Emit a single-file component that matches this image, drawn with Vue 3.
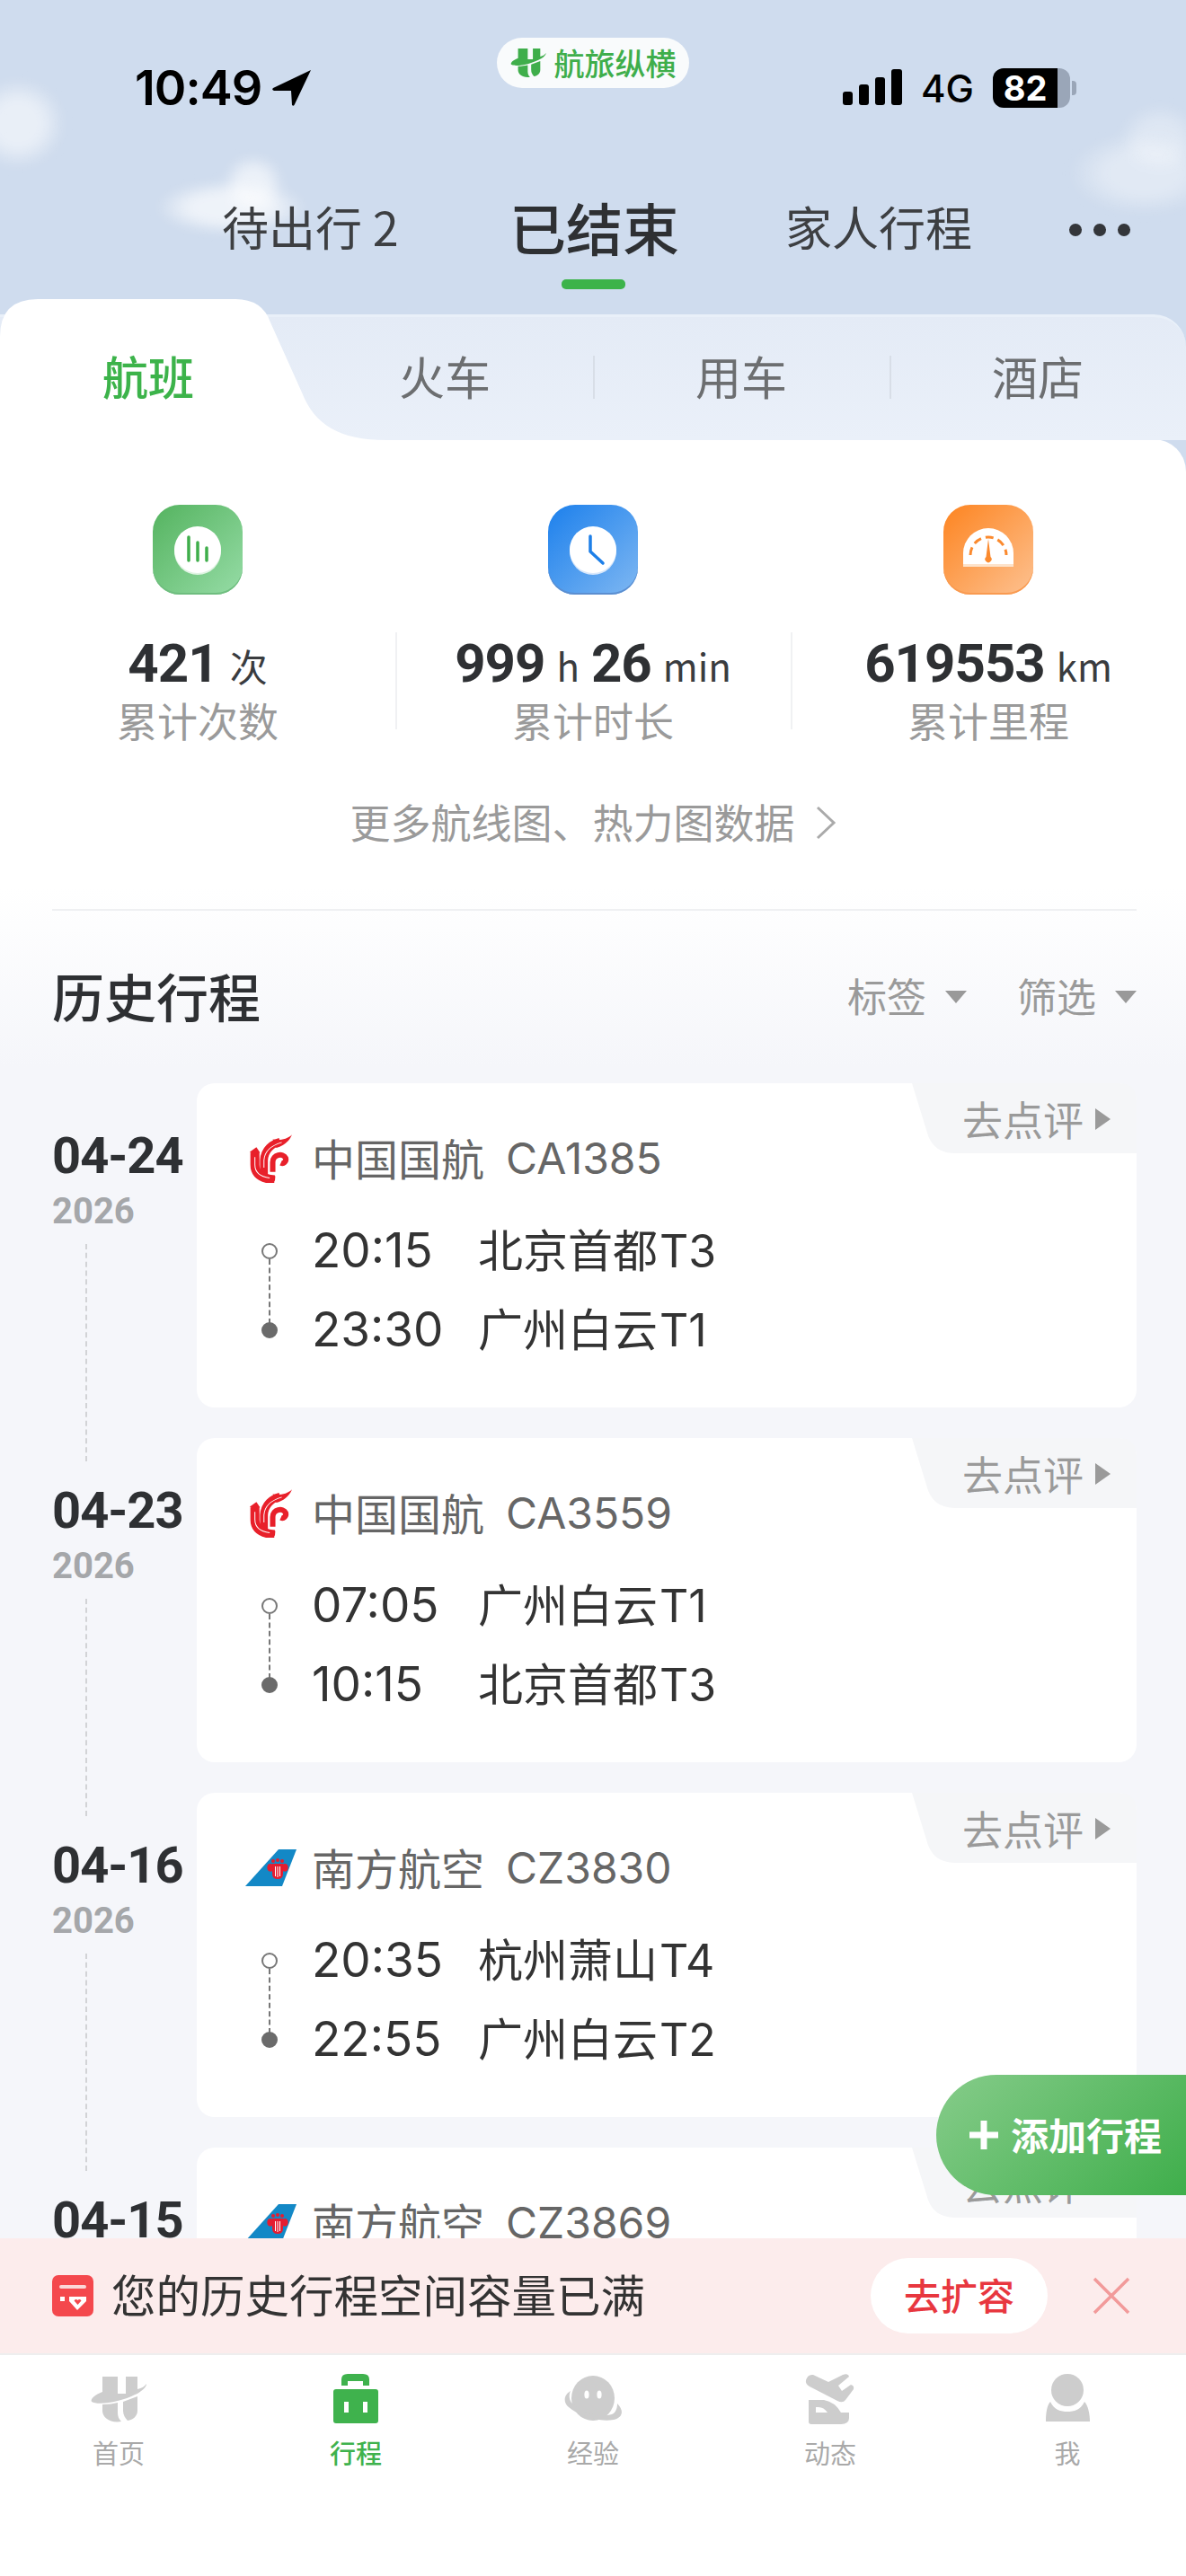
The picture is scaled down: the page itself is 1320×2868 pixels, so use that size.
<template>
  <div class="page">
    <!-- Sky header -->
    <header class="sky">
      <span class="cloud cloud-a"></span>
      <span class="cloud cloud-b"></span>
      <span class="cloud cloud-c"></span>

      <div class="status">
        <div class="status-time">
          <span>10:49</span>
          <svg width="44" height="42" viewBox="0 0 44 42"><path d="M43 1 L1 21 Q-1 23 2 24 L21 24 L22 40 Q24 42 25 39 Z" fill="#000" /></svg>
        </div>
        <div class="status-right">
          <svg width="66" height="42" viewBox="0 0 66 42" fill="#000">
            <rect x="0" y="25" width="11" height="15" rx="3" />
            <rect x="18" y="17" width="11" height="23" rx="3" />
            <rect x="36" y="9" width="11" height="31" rx="3" />
            <rect x="54" y="0" width="12" height="40" rx="3" />
          </svg>
          <span class="net">4G</span>
          <div class="battery">
            <div class="battery-fill">82</div>
            <div class="battery-rest"></div>
            <div class="battery-nub"></div>
          </div>
        </div>
      </div>

      <div class="island">
        <svg width="40" height="33" viewBox="0 0 62 52" fill="#3fae4b">
          <path d="M13 0 H30 V19 H39 V0 H52 V14 C57 13 60 11 62 8 C62 14 50 22 30 27 C18 30 6 31 1 28 C-1 25 5 20 13 17 Z" />
          <path d="M13 31 C20 31 25 30 30 29 V40 C30 44 31 47 34 50 C22 52 13 46 13 38 Z" />
          <path d="M36 28 L52 22 V38 C52 44 47 48 41 49 C38 46 36 42 36 38 Z" />
        </svg>
        <span>航旅纵横</span>
      </div>

      <nav class="top-tabs">
        <span class="top-tab first">待出行 2</span>
        <span class="top-tab active">已结束</span>
        <span class="top-tab last">家人行程</span>
        <span class="dots"><i></i><i></i><i></i></span>
      </nav>
    </header>

    <!-- Sub tabs -->
    <div class="subtabs">
      <div class="subtabs-strip"></div>
      <svg class="subtab-active" width="440" height="157" viewBox="0 0 440 157">
        <path d="M0 157 V42 Q0 0 42 0 H262 Q292 0 301 26 L336 104 C350 140 378 157 430 157 Z" fill="#fff" />
      </svg>
      <div class="subtabs-row">
        <span v-for="(t, i) in subTabs" :key="t" class="subtab" :class="{ on: i === 0, sep: i > 1 }">{{ t }}</span>
      </div>
    </div>

    <!-- Content -->
    <main class="content">
      <section class="stats">
        <div v-for="s in stats" :key="s.label" class="stat">
          <div class="stat-icon" :class="s.kind">
            <svg v-if="s.kind === 'green'" width="100" height="100" viewBox="0 0 100 100">
              <circle cx="50" cy="52" r="26" fill="#dff3e2" />
              <circle cx="50" cy="50" r="26" fill="#fff" />
              <path d="M40 36 V62 M50 42 V62 M60 48 V62" stroke="#3fae4b" stroke-width="3.5" stroke-linecap="round" />
            </svg>
            <svg v-else-if="s.kind === 'blue'" width="100" height="100" viewBox="0 0 100 100">
              <circle cx="50" cy="52" r="26" fill="#d7e7fb" />
              <circle cx="50" cy="50" r="26" fill="#fff" />
              <path d="M47 35 V52 L61 65" fill="none" stroke="#1d7fe8" stroke-width="3.5" stroke-linecap="round" stroke-linejoin="round" />
            </svg>
            <svg v-else width="100" height="100" viewBox="0 0 100 100">
              <path d="M22 66 V54 A28 28 0 0 1 78 54 V66 Z" fill="#fff" />
              <path d="M22 66 H78 V69 H22 Z" fill="#fde3cb" />
              <path d="M30 56 A20 20 0 0 1 70 56" fill="none" stroke="#fb8a2e" stroke-width="3" stroke-dasharray="9 5" />
              <path d="M50 38 L52.5 58 A3.6 3.6 0 1 1 47.5 58 Z" fill="#fb8a2e" />
            </svg>
          </div>
          <div class="stat-value">
            <template v-for="(p, i) in s.parts" :key="i">
              <b v-if="i % 2 === 0">{{ p }}</b>
              <small v-else>{{ p }}</small>
            </template>
          </div>
          <div class="stat-label">{{ s.label }}</div>
        </div>
      </section>

      <div class="more">
        <span>更多航线图、热力图数据</span>
        <svg width="24" height="40" viewBox="0 0 24 40"><path d="M3 3 L21 20 L3 37" fill="none" stroke="#aaa" stroke-width="3" /></svg>
      </div>

      <div class="divider"></div>

      <div class="section-head">
        <h2>历史行程</h2>
        <div class="filters">
          <span class="filter"><em>标签</em><i class="caret"></i></span>
          <span class="filter"><em>筛选</em><i class="caret"></i></span>
        </div>
      </div>

      <div class="trips">
        <article v-for="t in trips" :key="t.date + t.no" class="trip">
          <div class="trip-date">
            <div class="date">{{ t.date }}</div>
            <div class="year">2026</div>
            <div class="date-line"></div>
          </div>
          <div class="card">
            <div class="review">
              <svg class="review-bg" width="250" height="78" viewBox="0 0 250 78">
                <path d="M0 0 H230 Q250 0 250 20 V78 H48 Q22 78 16 52 Z" fill="#f5f6f8" />
              </svg>
              <span class="review-text">去点评</span>
              <i class="review-arrow"></i>
            </div>
            <div class="airline">
              <svg v-if="t.air === 'ca'" class="logo" width="47" height="54" viewBox="0 0 140 160">
                <path d="M17 60 L17 100 C17 130 38 146 82 150" fill="none" stroke="#e8202a" stroke-width="30" />
                <path d="M47 132 L47 85 C49 50 75 30 100 24" fill="none" stroke="#e8202a" stroke-width="26" />
                <path d="M45 122 C48 138 60 144 84 146" fill="none" stroke="#e8202a" stroke-width="16" />
                <path d="M140 0 C130 25 110 38 88 44 L76 16 C100 20 125 15 140 0 Z" fill="#e8202a" />
                <path d="M0 58 L22 42 L34 60 L15 68 Z" fill="#e8202a" />
                <path d="M76 124 L76 92 C76 66 110 60 119 78 C122 90 112 98 103 94" fill="none" stroke="#e8202a" stroke-width="18" />
                <path d="M17 75 L17 100 C17 126 36 140 66 144 M47 110 L47 85 C49 55 72 36 106 26" fill="none" stroke="#fff" stroke-width="3" />
              </svg>
              <svg v-else class="logo logo-cz" width="58" height="42" viewBox="0 0 58 42">
                <path d="M0 41 L37 0 H57 L41 41 Z" fill="#1388c6" />
                <g fill="#e51c30">
                  <circle cx="31" cy="13" r="2" />
                  <circle cx="36" cy="12" r="2" />
                  <circle cx="41" cy="13" r="2" />
                  <path d="M30 16 H42 V27 Q42 33 36 33 Q30 33 30 27 Z" />
                  <path d="M31 17 C26 14 23 18 25 23 C26 25 29 25 30 24 Z" />
                  <path d="M41 17 C46 14 49 18 47 23 C46 25 43 25 42 24 Z" />
                </g>
                <path d="M33.5 19 V30 M36 19 V31 M38.5 19 V30" stroke="#fff" stroke-width="1" />
              </svg>
              <span class="airline-name">{{ t.name }}</span>
              <span class="airline-no">{{ t.no }}</span>
            </div>
            <div class="leg from">
              <i class="dot-open"></i>
              <span class="leg-time">{{ t.dep }}</span>
              <span class="leg-place">{{ t.from }}</span>
            </div>
            <div class="leg">
              <i class="dot-full"></i>
              <span class="leg-time">{{ t.arr }}</span>
              <span class="leg-place">{{ t.to }}</span>
            </div>
          </div>
        </article>
      </div>
    </main>

    <!-- Floating add button -->
    <div class="fab">
      <svg width="34" height="36" viewBox="0 0 34 36"><path d="M17 2 V34 M1 18 H33" stroke="#fff" stroke-width="7" /></svg>
      <span>添加行程</span>
    </div>

    <!-- Capacity banner -->
    <div class="banner">
      <svg class="banner-icon" width="46" height="46" viewBox="0 0 46 46">
        <rect width="46" height="46" rx="7" fill="#f4484d" />
        <rect x="8" y="11" width="30" height="4" rx="2" fill="#fbd7d8" />
        <rect x="9" y="24" width="5" height="5" fill="#fff" />
        <path d="M19 24 H38 V29 L28 39 L19 29 Z" fill="#fff" />
        <path d="M28.5 33 L24.5 28.5 Q26.5 26 28.5 28 Q30.5 26 32.5 28.5 Z" fill="#f4484d" />
      </svg>
      <span class="banner-text">您的历史行程空间容量已满</span>
      <span class="banner-btn">去扩容</span>
      <svg class="banner-close" width="42" height="42" viewBox="0 0 42 42"><path d="M2 2 L40 40 M40 2 L2 40" stroke="#f29a9a" stroke-width="3.5" /></svg>
    </div>

    <!-- Tab bar -->
    <nav class="tabbar">
      <div v-for="b in barTabs" :key="b.key" class="bar-item" :class="{ on: b.key === 'trip' }">
        <svg width="66" height="58" viewBox="0 0 66 58">
          <g v-if="b.key === 'home'" fill="#cdcdcd" transform="translate(2 4)">
            <path d="M13 0 H30 V19 H39 V0 H52 V14 C57 13 60 11 62 8 C62 14 50 22 30 27 C18 30 6 31 1 28 C-1 25 5 20 13 17 Z" />
            <path d="M13 31 C20 31 25 30 30 29 V40 C30 44 31 47 34 50 C22 52 13 46 13 38 Z" />
            <path d="M36 28 L52 22 V38 C52 44 47 48 41 49 C38 46 36 42 36 38 Z" />
          </g>
          <g v-else-if="b.key === 'trip'" fill="#3fb24d">
            <path d="M10 14 V7 Q10 1 17 1 H34 Q41 1 41 7 V14 H34 V9 H17 V14 Z" transform="translate(7 0)" />
            <path d="M11 18 H55 Q58 18 58 21 V53 Q58 56 55 56 H11 Q8 56 8 53 V21 Q8 18 11 18 Z" />
            <rect x="20" y="32" width="5" height="12" fill="#fff" />
            <rect x="41" y="32" width="5" height="12" fill="#fff" />
          </g>
          <g v-else-if="b.key === 'exp'" fill="#cdcdcd">
            <ellipse cx="33" cy="28" rx="24" ry="25" />
            <path d="M8 20 C1 24 -1 32 6 38 C16 47 38 55 56 52 C66 50 68 42 60 34 C60 40 58 44 54 46 C40 50 20 44 10 34 C6 30 6 24 8 20 Z" />
            <ellipse cx="26" cy="24" rx="2.6" ry="4.5" fill="#fff" />
            <ellipse cx="40" cy="24" rx="2.6" ry="4.5" fill="#fff" />
          </g>
          <g v-else-if="b.key === 'feed'" fill="#cdcdcd">
            <path d="M14 2 L31 10 L47 2 Q53 0 54 4 L42 14 L46 20 L56 13 Q60 14 59 18 L50 30 Q47 34 41 31 L10 15 Q5 12 6 8 Q8 1 14 2 Z" />
            <path d="M9 30 H26 Q38 32 45 44 H54 V50 Q54 57 45 57 H12 Q9 57 9 54 Z M17 38 V44 H30 Q26 38 20 38 Z" fill-rule="evenodd" />
          </g>
          <g v-else fill="#cdcdcd">
            <ellipse cx="33" cy="19" rx="18" ry="18" />
            <path d="M14 32 C18 41 26 43 33 43 C40 43 48 41 52 32 C56 36 58 46 58 54 H9 C9 46 10 36 14 32 Z" />
          </g>
        </svg>
        <span>{{ b.label }}</span>
      </div>
    </nav>
  </div>
</template>

<script setup>
const subTabs = ['航班', '火车', '用车', '酒店'];

const stats = [
  { kind: 'green', parts: ['421', '次'], label: '累计次数' },
  { kind: 'blue', parts: ['999', 'h', '26', 'min'], label: '累计时长' },
  { kind: 'orange', parts: ['619553', 'km'], label: '累计里程' },
];

const trips = [
  { date: '04-24', air: 'ca', name: '中国国航', no: 'CA1385', dep: '20:15', from: '北京首都 T3', arr: '23:30', to: '广州白云 T1' },
  { date: '04-23', air: 'ca', name: '中国国航', no: 'CA3559', dep: '07:05', from: '广州白云 T1', arr: '10:15', to: '北京首都 T3' },
  { date: '04-16', air: 'cz', name: '南方航空', no: 'CZ3830', dep: '20:35', from: '杭州萧山 T4', arr: '22:55', to: '广州白云 T2' },
  { date: '04-15', air: 'cz', name: '南方航空', no: 'CZ3869', dep: '', from: '', arr: '', to: '' },
];

const barTabs = [
  { key: 'home', label: '首页' },
  { key: 'trip', label: '行程' },
  { key: 'exp', label: '经验' },
  { key: 'feed', label: '动态' },
  { key: 'me', label: '我' },
];
</script>

<style>
body {
  margin: 0;
  background: #fff;
}
</style>

<style scoped>
.page {
  position: relative;
  width: 1320px;
  height: 2868px;
  overflow: hidden;
  display: flex;
  flex-direction: column;
  background: #cfdcee;
  font-family: "Noto Sans CJK SC", "Noto Sans", sans-serif;
  color: #333;
}

.sky {
  position: relative;
  height: 333px;
  flex: none;
  overflow: hidden;
}

.cloud {
  position: absolute;
  filter: blur(6px);
}

.cloud-a {
  left: -40px;
  top: 85px;
  width: 120px;
  height: 105px;
  background: radial-gradient(ellipse 52px 50px at 50% 50%, rgba(255, 255, 255, 0.55) 50%, transparent 100%);
}

.cloud-b {
  left: 170px;
  top: 175px;
  width: 175px;
  height: 85px;
  background:
    radial-gradient(ellipse 34px 34px at 64% 36%, rgba(255, 255, 255, 0.6) 50%, transparent 100%),
    radial-gradient(ellipse 84px 30px at 50% 66%, rgba(255, 255, 255, 0.65) 55%, transparent 100%);
}

.cloud-c {
  left: 1165px;
  top: 115px;
  width: 175px;
  height: 130px;
  background:
    radial-gradient(ellipse 46px 38px at 72% 30%, rgba(255, 255, 255, 0.32) 50%, transparent 100%),
    radial-gradient(ellipse 84px 46px at 62% 60%, rgba(255, 255, 255, 0.38) 50%, transparent 100%);
}

.status {
  height: 198px;
  padding: 70px 122px 0 150px;
  box-sizing: border-box;
  display: flex;
  justify-content: space-between;
  align-items: flex-start;
  position: relative;
}

.status-time {
  display: flex;
  align-items: center;
  gap: 12px;
  font-family: Inter, Roboto, sans-serif;
  font-size: 54px;
  line-height: 56px;
  font-weight: 600;
  color: #000;
  letter-spacing: -1px;
}

.status-right {
  display: flex;
  align-items: center;
  gap: 21px;
  height: 56px;
}

.net {
  font-family: Inter, Roboto, sans-serif;
  font-size: 42px;
  font-weight: 500;
  color: #000;
}

.battery {
  display: flex;
  align-items: center;
}

.battery-fill {
  width: 72px;
  height: 44px;
  border-radius: 12px 0 0 12px;
  background: #000;
  color: #fff;
  font-family: Inter, Roboto, sans-serif;
  font-size: 38px;
  font-weight: 700;
  line-height: 44px;
  text-align: center;
}

.battery-rest {
  width: 14px;
  height: 44px;
  border-radius: 0 12px 12px 0;
  background: #9aa6b8;
}

.battery-nub {
  width: 5px;
  height: 16px;
  margin-left: 2px;
  border-radius: 0 4px 4px 0;
  background: #9aa6b8;
}

.island {
  position: absolute;
  left: 553px;
  top: 42px;
  width: 214px;
  height: 56px;
  border-radius: 28px;
  background: #f9fbfc;
  display: flex;
  align-items: center;
  justify-content: center;
  gap: 9px;
  color: #3fae4b;
  font-size: 34px;
  line-height: 56px;
  font-weight: 500;
}

.top-tabs {
  position: relative;
  height: 135px;
  display: flex;
  align-items: flex-start;
  padding-left: 247px;
}

.top-tab {
  font-size: 52px;
  line-height: 108px;
  color: #3d3f42;
  white-space: nowrap;
}

.top-tab.first {
  width: 320px;
}

.top-tab.active {
  position: relative;
  width: 307px;
  font-size: 63px;
  font-weight: 500;
  color: #2e3033;
}

.top-tab.active::after {
  content: "";
  position: absolute;
  left: 58px;
  top: 113px;
  width: 71px;
  height: 11px;
  border-radius: 5px;
  background: #3cb34a;
}

.top-tab.last {
  width: 316px;
}

.dots {
  display: flex;
  gap: 13px;
  margin-top: 51px;
}

.dots i {
  width: 14px;
  height: 14px;
  border-radius: 50%;
  background: #34363a;
}

.subtabs {
  position: relative;
  height: 157px;
  flex: none;
}

.subtabs-strip {
  position: absolute;
  left: 0;
  right: 0;
  top: 17px;
  bottom: 0;
  border-top: 3px solid #e9f0f9;
  border-radius: 0 36px 0 0;
  background: linear-gradient(180deg, #e4ebf6, #eaf0f9);
}

.subtab-active {
  position: absolute;
  left: 0;
  top: 0;
}

.subtabs-row {
  position: relative;
  display: grid;
  grid-template-columns: repeat(4, 330px);
  height: 157px;
}

.subtab {
  position: relative;
  text-align: center;
  font-size: 51px;
  line-height: 170px;
  color: #6c6e70;
}

.subtab.on {
  color: #3cb34a;
  font-weight: 500;
}

.subtab.sep::before {
  content: "";
  position: absolute;
  left: 0;
  top: 63px;
  height: 48px;
  width: 2px;
  background: #d8dee7;
}

.content {
  flex: 1;
  min-height: 0;
  overflow: hidden;
  border-radius: 0 36px 0 0;
  background: linear-gradient(180deg, #fff 0, #fff 500px, #f5f6fa 700px);
  margin-top: -1px;
}

.stats {
  display: grid;
  grid-template-columns: repeat(3, 440px);
  padding-top: 73px;
}

.stat {
  position: relative;
  display: flex;
  flex-direction: column;
  align-items: center;
}

.stat + .stat::before {
  content: "";
  position: absolute;
  left: 0;
  top: 142px;
  height: 108px;
  width: 2px;
  background: #f0f1f3;
}

.stat-icon {
  width: 100px;
  height: 100px;
  border-radius: 30px;
}

.stat-icon svg {
  display: block;
}

.stat-icon.green {
  background: linear-gradient(135deg, #54b35f, #96dca6);
  box-shadow: inset 0 -2px 0 #6fbd7f;
}

.stat-icon.blue {
  background: linear-gradient(135deg, #1c80ec, #7eb7f2);
  box-shadow: inset 0 -2px 0 #5b8ed0;
}

.stat-icon.orange {
  background: linear-gradient(135deg, #fd8420, #fdc190);
  box-shadow: inset 0 -2px 0 #f99a50;
}

.stat-value {
  margin-top: 39px;
  height: 76px;
  display: flex;
  align-items: baseline;
  line-height: 76px;
  white-space: nowrap;
}

.stat-value b {
  font-family: Roboto, sans-serif;
  font-size: 60px;
  font-weight: 700;
  letter-spacing: -1px;
  color: #2e3033;
}

.stat-value small {
  font-size: 42px;
  margin: 0 13px;
  color: #3a3c3f;
}

.stat-value small:last-child {
  margin-right: 0;
}

.stat-label {
  margin-top: 0;
  font-size: 45px;
  line-height: 50px;
  color: #9a9a9a;
}

.more {
  margin-top: 59px;
  height: 60px;
  display: flex;
  align-items: center;
  justify-content: center;
  gap: 22px;
  font-size: 45px;
  color: #9a9a9a;
}

.more span {
  margin-bottom: 4px;
}

.divider {
  margin: 66px 55px 0 58px;
  height: 2px;
  background: #eff0f2;
}

.section-head {
  margin: 61px 55px 0 58px;
  height: 70px;
  display: flex;
  justify-content: space-between;
  align-items: center;
}

.section-head h2 {
  margin: 0 0 4px;
  font-size: 58px;
  font-weight: 500;
  color: #2e3033;
}

.filters {
  display: flex;
  gap: 56px;
}

.filter {
  display: flex;
  align-items: center;
  gap: 21px;
  font-size: 44px;
  color: #9a9a9a;
}

.filter em {
  font-style: normal;
  margin-bottom: 4px;
}

.caret {
  width: 0;
  height: 0;
  border-left: 12px solid transparent;
  border-right: 12px solid transparent;
  border-top: 14px solid #999;
}

.trips {
  margin-top: 61px;
  padding: 0 55px 0 58px;
}

.trip {
  height: 395px;
  display: flex;
}

.trip-date {
  width: 161px;
  flex: none;
  padding-top: 52px;
}

.date {
  font-family: Roboto, sans-serif;
  font-size: 56px;
  line-height: 58px;
  font-weight: 700;
  color: #2e3033;
  letter-spacing: -1px;
}

.year {
  margin-top: 11px;
  font-family: Roboto, sans-serif;
  font-size: 40px;
  line-height: 44px;
  font-weight: 700;
  color: #a5a7aa;
}

.date-line {
  margin: 14px 0 0 37px;
  height: 242px;
  border-left: 2px dashed #d2d3d6;
}

.card {
  position: relative;
  flex: 1;
  height: 361px;
  padding-top: 55px;
  box-sizing: border-box;
  border-radius: 20px;
  background: #fff;
}

.review {
  position: absolute;
  right: 0;
  top: 0;
  width: 250px;
  height: 78px;
  display: flex;
  align-items: center;
  font-size: 45px;
  color: #9a9a9a;
}

.review-bg {
  position: absolute;
  left: 0;
  top: 0;
}

.review-text {
  position: relative;
  margin-left: 56px;
  margin-top: 2px;
  line-height: 78px;
}

.review-arrow {
  position: relative;
  margin-left: 13px;
  margin-top: 2px;
  width: 0;
  height: 0;
  border-top: 12px solid transparent;
  border-bottom: 12px solid transparent;
  border-left: 17px solid #9a9a9a;
}

.airline {
  height: 60px;
  display: flex;
  align-items: center;
  padding-left: 59px;
  font-size: 48px;
  color: #666;
}

.airline-name {
  margin-right: 24px;
  margin-bottom: 6px;
}

.airline-no {
  margin-bottom: 4px;
  font-family: Inter, "Noto Sans CJK SC", sans-serif;
}

.logo {
  width: 47px;
  margin-right: 22px;
  margin-bottom: 3px;
  flex: none;
}

.logo-cz {
  width: 58px;
  margin-left: -5px;
  margin-right: 16px;
}

.leg {
  position: relative;
  height: 88px;
  display: flex;
  align-items: center;
  padding-left: 128px;
}

.leg.from {
  margin-top: 28px;
}

.leg-time {
  width: 185px;
  margin-bottom: 2px;
  font-family: Inter, "Noto Sans CJK SC", sans-serif;
  font-size: 53px;
  color: #333;
  flex: none;
}

.leg-place {
  margin-bottom: 8px;
  font-family: Inter, "Noto Sans CJK SC", sans-serif;
  font-size: 50px;
  color: #333;
  white-space: nowrap;
  word-spacing: -12px;
}

.dot-open,
.dot-full {
  position: absolute;
  left: 72px;
  top: 35px;
  width: 18px;
  height: 18px;
  box-sizing: border-box;
  border-radius: 50%;
  border: 2px solid #777;
}

.dot-open::after {
  content: "";
  position: absolute;
  left: 6px;
  top: 16px;
  height: 72px;
  border-left: 2px dashed #777;
}

.dot-full {
  background: #6b6b6b;
  border-color: #6b6b6b;
}

.fab {
  position: absolute;
  left: 1042px;
  top: 2310px;
  width: 278px;
  height: 134px;
  border-radius: 67px 0 0 67px;
  box-sizing: border-box;
  padding-left: 36px;
  display: flex;
  align-items: center;
  gap: 13px;
  background: linear-gradient(135deg, #86cc8a, #3fae4b);
  color: #fff;
  font-size: 42px;
  font-weight: 700;
}

.fab span {
  margin-bottom: 4px;
}

.banner {
  flex: none;
  height: 128px;
  display: flex;
  align-items: center;
  padding: 0 62px 0 58px;
  background: #fcecec;
}

.banner-icon {
  flex: none;
}

.banner-text {
  margin-left: 20px;
  margin-bottom: 6px;
  font-size: 49.5px;
  color: #333;
  flex: 1;
}

.banner-btn {
  width: 197px;
  height: 84px;
  border-radius: 42px;
  background: #fff;
  color: #e8373f;
  font-size: 41px;
  line-height: 80px;
  text-align: center;
  font-weight: 500;
}

.banner-close {
  margin-left: 50px;
}

.tabbar {
  flex: none;
  height: 248px;
  box-sizing: border-box;
  display: grid;
  grid-template-columns: repeat(5, 264px);
  border-top: 2px solid #eeeeee;
  background: #fff;
  padding-top: 20px;
}

.bar-item {
  display: flex;
  flex-direction: column;
  align-items: center;
  font-size: 29px;
  line-height: 40px;
  color: #a9a9a9;
}

.bar-item svg {
  display: block;
}

.bar-item span {
  margin-top: 10px;
}

.bar-item.on {
  color: #3fb24d;
  font-weight: 500;
}
</style>
